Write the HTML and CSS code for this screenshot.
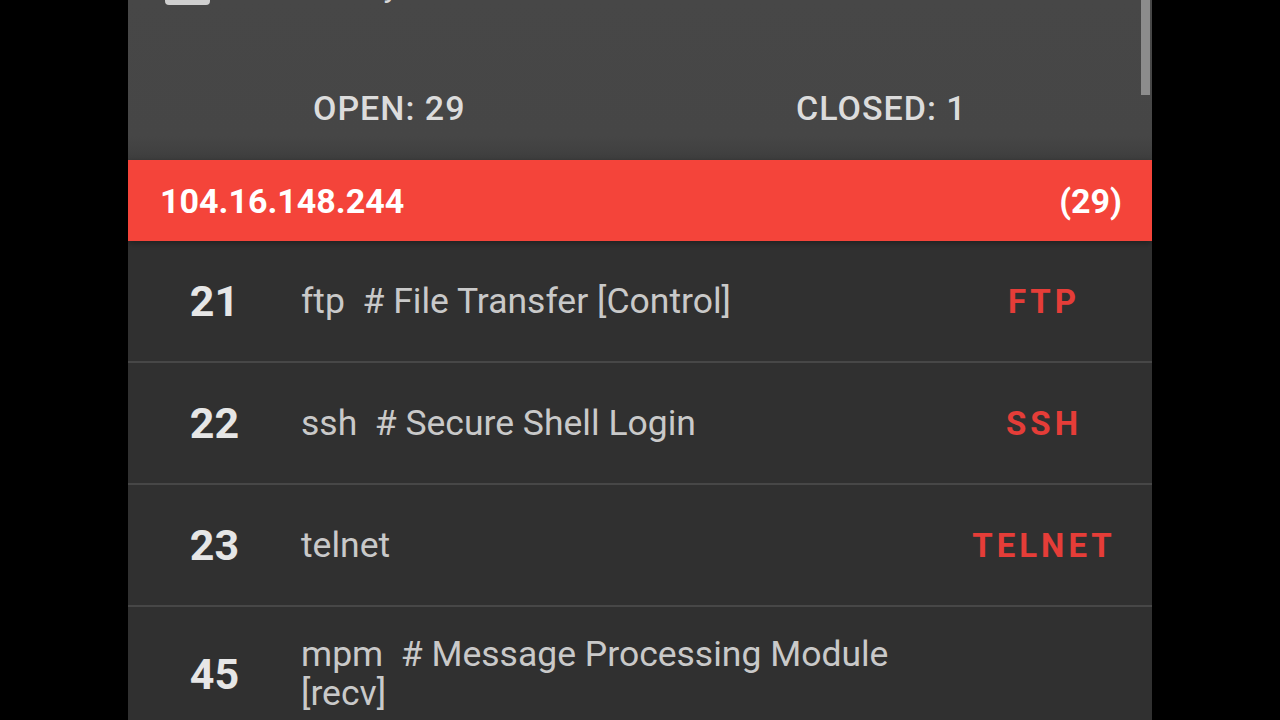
FILE: index.html
```html
<!DOCTYPE html>
<html lang="en">
<head>
    <meta charset="UTF-8">
    <meta name="viewport" content="width=device-width, initial-scale=1.0">
    <title>Port Scanner</title>
    <link rel="stylesheet" href="styles.css">
</head>
<body>

    <div class="screen">
        <div class="scrollbar"></div> <!-- полоса прокрутки поверх списка -->

        <div class="summary">
            <div class="option-row">
                <span class="checkbox"></span>
                <span class="option-text">Show only closed</span>
                <span class="option-action">RESET</span>
            </div>
            <div class="counts">
                <span class="count count-open">OPEN: 29</span>
                <span class="count count-closed">CLOSED: 1</span>
            </div>
        </div>

        <div class="host-bar">
            <span class="host-ip">104.16.148.244</span>
            <span class="host-total">(29)</span>
        </div>

        <ul class="ports">
            <li class="port">
                <span class="port-num">21</span>
                <span class="port-desc">ftp&nbsp; # File Transfer [Control]</span>
                <span class="port-tag">FTP</span>
            </li>
            <li class="port">
                <span class="port-num">22</span>
                <span class="port-desc">ssh&nbsp; # Secure Shell Login</span>
                <span class="port-tag">SSH</span>
            </li>
            <li class="port">
                <span class="port-num">23</span>
                <span class="port-desc">telnet</span>
                <span class="port-tag">TELNET</span>
            </li>
            <li class="port">
                <span class="port-num">45</span>
                <span class="port-desc">mpm&nbsp; # Message Processing Module [recv]</span>
                <span class="port-tag"></span>
            </li>
            <li class="port">
                <span class="port-num">53</span>
                <span class="port-desc">domain&nbsp; # Domain Name Server</span>
                <span class="port-tag">DNS</span>
            </li>
        </ul>
    </div>

</body>
</html>
```

FILE: styles.css
```css
/* Основные стили */
body {
    margin: 0;
    background-color: #000;
    font-family: 'Roboto', 'Liberation Sans', sans-serif;
    overflow: hidden;
}

.screen {
    width: 1024px;
    height: 720px;
    margin: 0 auto;
    background-color: #303030;
    position: relative;
    overflow: hidden;
}

.scrollbar {
    position: absolute;
    top: 0;
    right: 2px;
    width: 9px;
    height: 95px;
    background-color: #8c8c8c;
    z-index: 3;
}

/* Верхняя панель со счётчиками */
.summary {
    display: flow-root;
    background: linear-gradient(#474747, #464646 85%, #3e3e3e);
    height: 160px;
}

.option-row {
    display: flex;
    align-items: flex-end;
    height: 48px;
    margin-top: -44px;
    padding-left: 37px;
}

.checkbox {
    width: 45px;
    height: 44px;
    border-radius: 4px;
    background-color: #cfcfcf;
    margin-bottom: -1px;
}

.option-text {
    margin-left: 43px;
    font-size: 32px;
    color: #d8d8d8;
    line-height: 1;
    margin-bottom: 2px;
}

.option-action {
    margin-left: auto;
    margin-right: 95px;
    font-size: 30px;
    font-weight: bold;
    letter-spacing: 4px;
    color: #e0403a;
    line-height: 1;
    margin-bottom: -1px;
}

.counts {
    display: grid;
    grid-template-columns: 1fr 1fr;
    margin-top: 84px;
}

.count {
    font-size: 34px;
    font-weight: 500;
    color: #dcdcdc;
    letter-spacing: 1px;
}

.count-open {
    padding-left: 185px;
}

.count-closed {
    padding-left: 156px;
}

/* Строка хоста */
.host-bar {
    display: flex;
    justify-content: space-between;
    align-items: center;
    height: 81px;
    padding: 0 30px 0 32px;
    background-color: #f4443a;
    color: #fff;
    font-size: 34px;
    font-weight: bold;
    box-shadow: 0 2px 6px rgba(0, 0, 0, 0.35);
    position: relative;
    z-index: 2;
}

/* Список портов */
.ports {
    list-style: none;
    margin: 0;
    padding: 0;
}

.port {
    display: grid;
    grid-template-columns: 173px 663px 160px;
    align-items: center;
    box-sizing: border-box;
    min-height: 122px;
    padding: 28px 0;
    border-bottom: 2px solid #474747;
}

.port-num {
    text-align: center;
    font-size: 43px;
    font-weight: bold;
    color: #e6e6e6;
}

.port-desc {
    font-size: 35.5px;
    line-height: 39px;
    color: #c9c9c9;
}

.port-tag {
    text-align: center;
    font-size: 33px;
    font-weight: bold;
    letter-spacing: 4px;
    color: #e53d38;
}
```
